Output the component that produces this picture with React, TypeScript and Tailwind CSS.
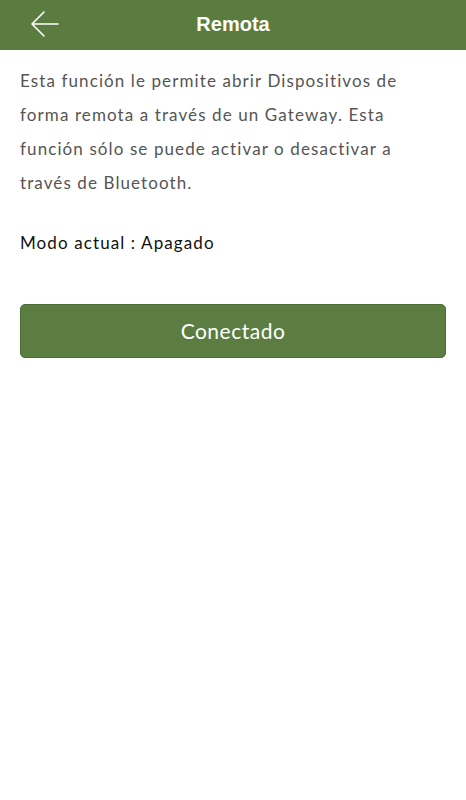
import React from "react";

export default function App() {
  return (
    <div className="w-[466px] h-[800px] bg-white" style={{ fontFamily: '"Lato", "Noto Sans", sans-serif' }}>
      <div className="h-[50px] bg-[#5a7c3f] flex items-center relative">
        <svg className="absolute left-[31px] top-[11px]" width="28" height="26" viewBox="0 0 28 26" fill="none">
          <path d="M13 1 L1 13 L13 25 M1 13 H27" stroke="white" strokeWidth="1.6" strokeLinecap="round" strokeLinejoin="round" />
        </svg>
        <div className="w-full text-center text-white text-[20px] font-bold pb-[2px]" style={{ fontFamily: '"Liberation Sans", Arial, sans-serif' }}>Remota</div>
      </div>
      <div className="px-5 pt-[14px]">
        <p className="text-[#555555] text-[17px] leading-[34px] tracking-[1.1px] whitespace-nowrap">
          Esta función le permite abrir Dispositivos de
          <br />
          forma remota a través de un Gateway. Esta
          <br />
          función sólo se puede activar o desactivar a
          <br />
          través de Bluetooth.
        </p>
        <p className="mt-[26px] text-[#111111] text-[17px] leading-[34px] tracking-[1.1px]">Modo actual : Apagado</p>
        <button className="mt-[44px] w-full h-[54px] rounded-[5px] bg-[#5b7d41] border border-[#4b6c32] text-white text-[21px] tracking-[0.5px]">
          Conectado
        </button>
      </div>
    </div>
  );
}
